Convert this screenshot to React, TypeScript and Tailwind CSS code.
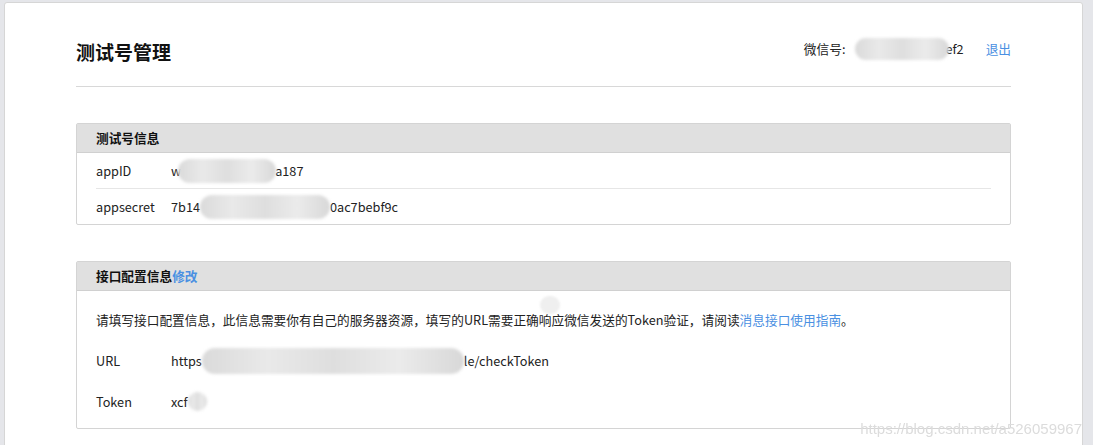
import React from 'react';

// blurred block used to mask private values
function Mask({ className = '' }: { className?: string }) {
  return (
    <span
      className={`inline-block rounded-full bg-[linear-gradient(90deg,#dadada,#e9e9e9_25%,#dedede_50%,#ebebeb_75%,#d8d8d8)] blur-[1.5px] ${className}`}
    />
  );
}

function InfoBox({ title, children }: { title: React.ReactNode; children: React.ReactNode }) {
  return (
    <div className="border border-[#d4d4d4] rounded-[2px] bg-white">
      <div className="h-[29px] border-b border-[#d0d0d0] bg-[#e0e0e0] px-[19px] flex items-center font-bold text-[#111]">
        {title}
      </div>
      {children}
    </div>
  );
}

export default function App() {
  const font = { fontFamily: '"Noto Sans CJK SC", "Noto Sans", sans-serif' };

  return (
    <div className="min-h-screen bg-[#e5e6ea] pl-[4px] pr-[10px] pt-[2px]" style={font}>
      <div className="relative bg-white border border-[#d6d6d6] rounded-[3px] px-[71px] pt-[35px] pb-[60px] text-[12.7px] text-[#222]">
        {/* header */}
        <div className="flex items-start justify-between">
          <h1 className="mt-px text-[19px] leading-[26px] font-bold text-[#111]">测试号管理</h1>
          <div className="flex items-center leading-[18px]">
            <span>微信号:</span>
            <Mask className="ml-[10px] w-[94px] h-[22px]" />
            <span className="-ml-[4px]">ef2</span>
            <a className="ml-[22px] text-[#4a90e2] cursor-pointer">退出</a>
          </div>
        </div>
        <div className="mt-[21px] border-t border-[#d8d8d8]" />

        {/* 测试号信息 */}
        <div className="mt-[36px]">
          <InfoBox title="测试号信息">
            <div className="px-[19px]">
              <div className="h-[36px] flex items-center border-b border-[#e6e6e6]">
                <span className="w-[75px]">appID</span>
                <span>w</span>
                <Mask className="-ml-[3px] w-[98px] h-[24px]" />
                <span className="-ml-[1px]">a187</span>
              </div>
              <div className="h-[35px] flex items-center">
                <span className="w-[75px]">appsecret</span>
                <span>7b14</span>
                <Mask className="w-[130px] h-[24px]" />
                <span>0ac7bebf9c</span>
              </div>
            </div>
          </InfoBox>
        </div>

        {/* 接口配置信息 */}
        <div className="mt-[36px]">
          <InfoBox
            title={
              <>
                接口配置信息<a className="text-[#4a90e2] font-bold cursor-pointer">修改</a>
              </>
            }
          >
            <div className="relative px-[19px] pt-[8px] pb-[6px]">
              <span className="absolute left-[463px] top-[5px] w-[20px] h-[18px] rounded-full bg-[#efefef] blur-[1px]" />
              <div className="h-[41px] flex items-center">
                <p>
                  请填写接口配置信息，此信息需要你有自己的服务器资源，填写的URL需要正确响应微信发送的Token验证，请阅读
                  <a className="text-[#4a90e2] cursor-pointer">消息接口使用指南</a>。
                </p>
              </div>
              <div className="h-[41px] flex items-center">
                <span className="w-[75px]">URL</span>
                <span>https</span>
                <Mask className="w-[262px] h-[26px]" />
                <span>le/checkToken</span>
              </div>
              <div className="h-[41px] flex items-center">
                <span className="w-[75px]">Token</span>
                <span>xcf</span>
                <Mask className="w-[19px] h-[19px]" />
              </div>
            </div>
          </InfoBox>
        </div>
      </div>

      {/* csdn watermark */}
      <div
        className="fixed right-[11px] top-[419px] text-[15px] leading-[20px] text-[#dcdcdc]"
        style={{ fontFamily: '"Liberation Sans", Arial, sans-serif' }}
      >
        https://blog.csdn.net/a526059967
      </div>
    </div>
  );
}
